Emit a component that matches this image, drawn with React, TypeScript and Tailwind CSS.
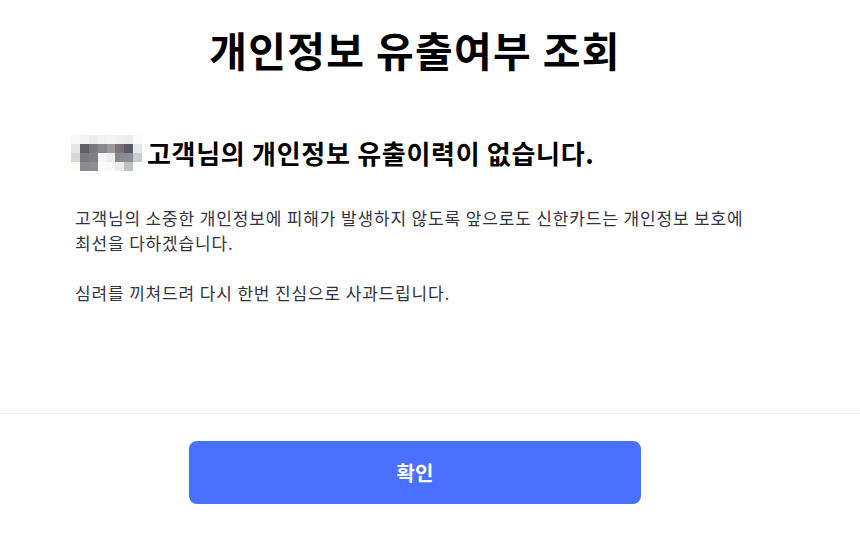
import React from "react";

const mosaic: string[][] = [
  ["bg-[#f8f8f8]", "bg-[#f3f3f3]", "bg-[#ececec]", "bg-[#f2f2f2]", "bg-[#f5f5f5]", "bg-[#f0f0f0]", "bg-[#ededed]", "bg-[#fafafa]"],
  ["bg-[#e6e6e6]", "bg-[#5e5e66]", "bg-[#7a7a80]", "bg-[#8a8888]", "bg-[#9a9aa2]", "bg-[#7e7070]", "bg-[#5a5a68]", "bg-[#e8e8ec]"],
  ["bg-[#d8d8d8]", "bg-[#7a7a7e]", "bg-[#808084]", "bg-[#f4f4f4]", "bg-[#ececec]", "bg-[#8a8a8c]", "bg-[#8c8c90]", "bg-[#c8ccd4]"],
  ["bg-[#fbfbf8]", "bg-[#8a8a8c]", "bg-[#8c8c90]", "bg-[#fafafa]", "bg-[#fafafa]", "bg-[#ececec]", "bg-[#c0c0c8]", "bg-white"],
];

export default function App() {
  return (
    <div className="w-[860px] h-[534px] bg-white flex flex-col font-['Noto_Sans_CJK_KR','Noto_Sans',sans-serif] overflow-hidden">
      <div className="flex-1 w-[830px]">
        <h1 className="text-center text-[41px] font-bold text-black leading-none pt-[29px] tracking-[1.3px]">
          개인정보 유출여부 조회
        </h1>

        <div className="pl-[71px] pt-[65px]">
          <div className="flex items-center gap-[5px]">
            <div className="grid grid-cols-8 w-[71px] shrink-0">
              {mosaic.flat().map((c, i) => (
                <div key={i} className={`${c} h-[9px]`} />
              ))}
            </div>
            <h2 className="text-[26px] font-bold text-black leading-none tracking-[0.7px]">
              고객님의 개인정보 유출이력이 없습니다.
            </h2>
          </div>

          <div className="pl-[4px] pt-[35px] text-[17px] leading-[24.5px] tracking-[0.85px] text-[#33333f]">
            <p>
              고객님의 소중한 개인정보에 피해가 발생하지 않도록 앞으로도 신한카드는 개인정보 보호에
              <br />
              최선을 다하겠습니다.
            </p>
            <p className="mt-[25.5px]">심려를 끼쳐드려 다시 한번 진심으로 사과드립니다.</p>
          </div>
        </div>
      </div>

      <div className="border-t border-[#ececec] h-[121px] pt-[27px]">
        <div className="w-[830px] flex justify-center">
          <button className="w-[452px] h-[63px] rounded-[8px] bg-[#4a70ff] text-white text-[20px] font-bold">
            확인
          </button>
        </div>
      </div>
    </div>
  );
}
